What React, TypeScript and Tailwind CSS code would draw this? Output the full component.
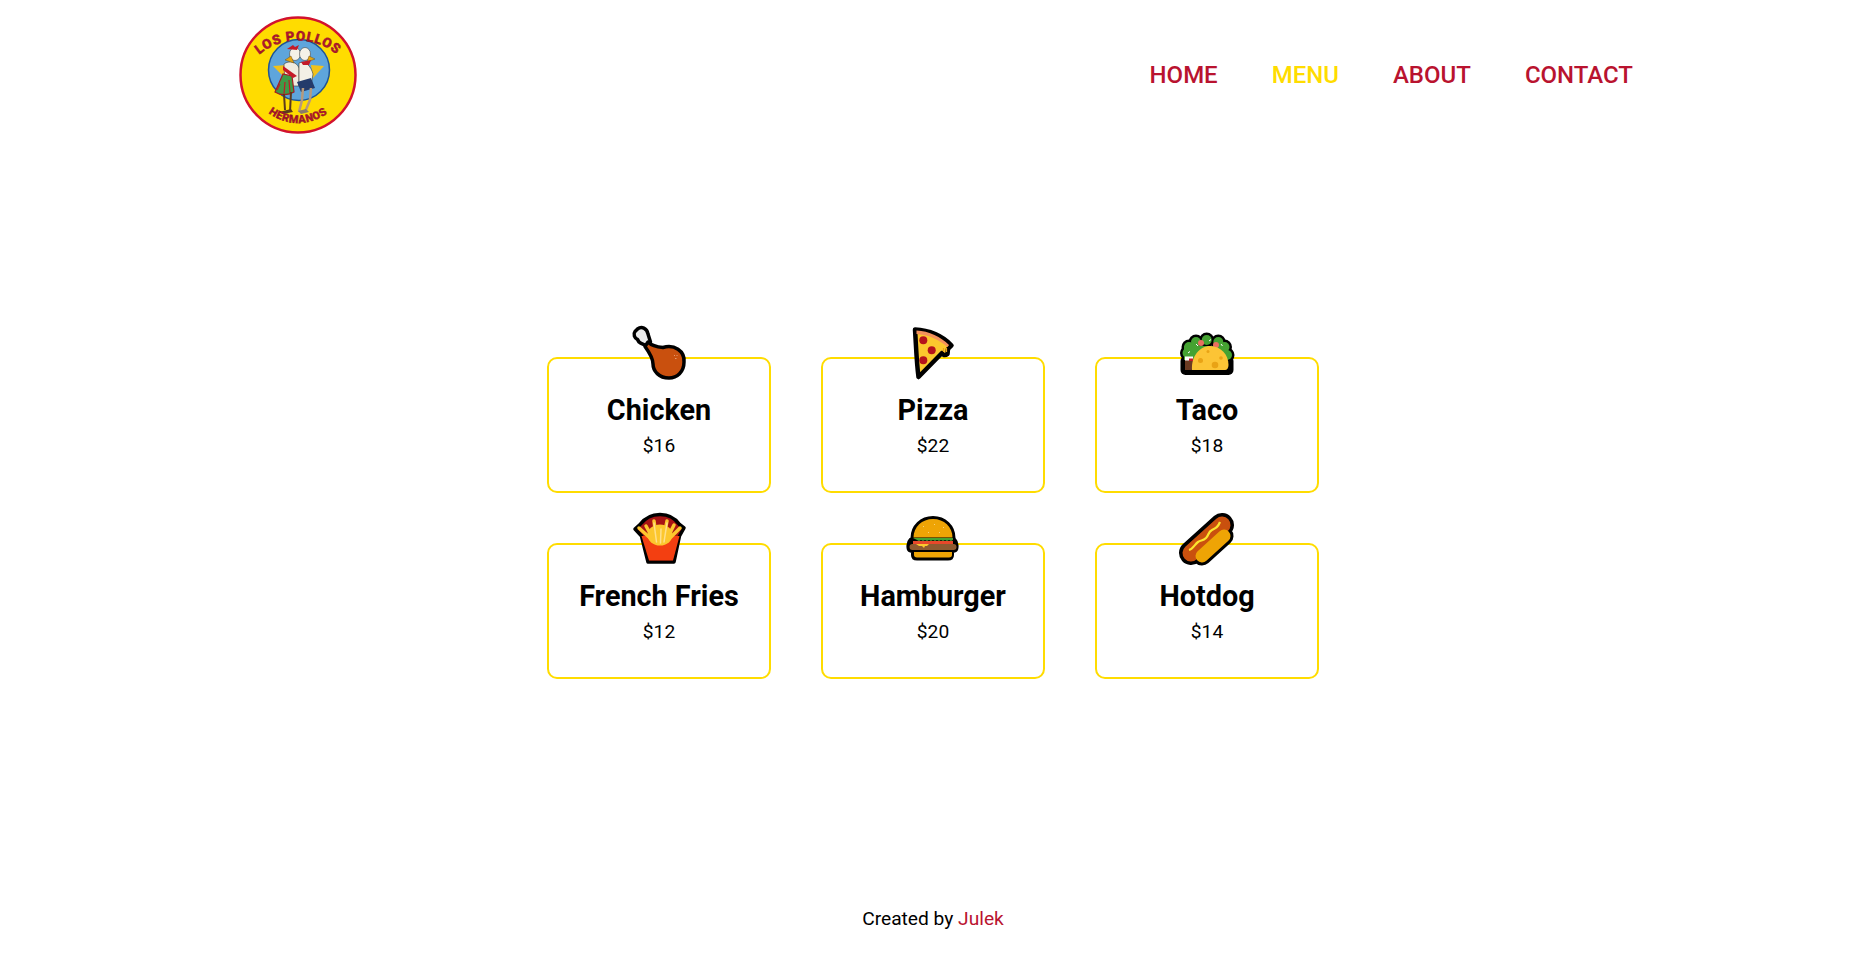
import React from 'react';

const Logo = () => (
  <svg width="118" height="118" viewBox="0 0 118 118" className="shrink-0">
    <circle cx="59" cy="59" r="57.5" fill="#ffdc00" stroke="#d2122e" strokeWidth="2.500" />
    <circle cx="60" cy="54" r="30.5" fill="#5ea5dc" stroke="#1f5596" strokeWidth="1.500" />
    <defs>
      <path id="logoTop" d="M 20 39 A 60 60 0 0 1 98 39" />
      <path id="logoBottom" d="M 12 72 A 49 49 0 0 0 106 72" />
    </defs>
    {/* star behind the birds */}
    <path d="M34 50 L48 49 L46 62 Z" fill="#f2c21a" />
    <path d="M85 50 L72 49 L74 62 Z" fill="#f2c21a" />
    {/* left bird */}
    <path d="M45 48 C50 44 58 46 60 52 L60 70 L46 70 Z" fill="#f0ece0" stroke="#3a3a30" strokeWidth="0.600" />
    <path d="M44 58 L36 76 C42 80 50 79 55 76 L53 60 Z" fill="#3f9a46" stroke="#a31d22" strokeWidth="1.200" />
    <path d="M41 68 L38 74 M46 66 L45 78 M50 64 L51 77" stroke="#c41a28" strokeWidth="1.200" />
    <path d="M44 50 L58 60 L54 62 L44 54 Z" fill="#c41a28" />
    <path d="M45 78 L46 94 M52 76 L51 96" stroke="#5b3a1e" strokeWidth="2" fill="none" />
    <path d="M40 96 L52 93 L54 96 L44 98 Z" fill="#5b3a1e" />
    <ellipse cx="56" cy="38" rx="5.500" ry="6.500" fill="#f5f2e8" stroke="#444" strokeWidth="0.600" />
    <path d="M52 40 L46 44 L55 47 Z" fill="#e3a612" stroke="#5a3a10" strokeWidth="0.400" />
    <path d="M48 33 L54 29 L56 31 L60 29 L58 34 Z" fill="#c41a28" />
    {/* right bird */}
    <path d="M60 47 C66 44 72 50 74 58 L72 70 L60 70 Z" fill="#f3f0e6" stroke="#3a3a30" strokeWidth="0.600" />
    <path d="M58 66 L72 62 L76 72 L62 76 Z" fill="#243b6b" />
    <path d="M64 72 L63 84 L60 96 M72 72 L71 84 L66 96" stroke="#b79a7c" strokeWidth="2.500" fill="none" />
    <path d="M59 95 L67 93 L70 96 L62 98 Z" fill="#8b7a6a" />
    <ellipse cx="66" cy="38" rx="5.500" ry="6.500" fill="#f5f2e8" stroke="#444" strokeWidth="0.600" />
    <path d="M70 40 L76 43 L68 46 Z" fill="#e3a612" stroke="#5a3a10" strokeWidth="0.400" />
    <path d="M62 46 L72 44 L70 49 L64 49 Z" fill="#c41a28" />
    <text fontFamily="Roboto, sans-serif" fontWeight="900" fontSize="13.500" fill="#b3172c" stroke="#7a1020" strokeWidth="0.300" letterSpacing="0.600">
      <textPath href="#logoTop" startOffset="50%" textAnchor="middle">LOS POLLOS</textPath>
    </text>
    <text fontFamily="Roboto, sans-serif" fontWeight="900" fontSize="11" fill="#b3172c" stroke="#7a1020" strokeWidth="0.300" letterSpacing="0.400">
      <textPath href="#logoBottom" startOffset="50%" textAnchor="middle">HERMANOS</textPath>
    </text>
  </svg>
);

const ChickenIcon = () => (
  <svg viewBox="0 0 64 64" className="w-16 h-16">
    <path d="M23.500 22 L21 14 C20 8 14.500 6 10.500 9 L8 11.500 C6 14 7.500 18.500 10.500 19.500 L12 22 C14 24 17 24.500 20 26 Z" fill="#ebebeb" stroke="#000" strokeWidth="3.500" strokeLinejoin="round" />
    <path d="M21 22 C25 26 30 27 36 27.500 C47 24 58 31 57 42 C57 52 50 58 42 58 C32 58 26 51 26 44 C26 38 22 32 18 26.500 Z" fill="#c9500e" stroke="#000" strokeWidth="3.500" strokeLinejoin="round" />
    <path d="M47 35 h1 v1 h-1z M49.500 35 h1 v1 h-1z M48 38 h1.500 v1 h-1.500z" fill="#e89a70" />
  </svg>
);

const PizzaIcon = () => (
  <svg viewBox="0 0 64 64" className="w-16 h-16">
    <path d="M14 9.500 C28 10 42 16 50.500 25.500 L47 29 L46.500 34 C44 36 41.500 35 41 33 L17.500 57 C15.500 42 15 24 14 9.500 Z" fill="#fcc72e" stroke="#000" strokeWidth="4.500" strokeLinejoin="round" />
    <path d="M15.500 10.500 C28 11 40 17 48 25 L46.500 27 C38 19.500 27 14.500 15.500 14 Z" fill="#f4915c" />
    <circle cx="22.300" cy="20.300" r="4" fill="#b5121b" />
    <circle cx="30.700" cy="30.300" r="4" fill="#b5121b" />
    <circle cx="22.300" cy="40.300" r="4" fill="#b5121b" />
    <path d="M42.500 28 L42.500 32 M45.500 28 L45.500 32" stroke="#e9a315" strokeWidth="1.200" />
  </svg>
);

const TacoIcon = () => {
  const bumps = [[12.500, 33], [14, 27], [21, 22], [31.700, 20], [43.300, 22], [49.500, 27], [52, 35]];
  return (
    <svg viewBox="0 0 64 64" className="w-16 h-16">
      {bumps.map(([x, y]) => (
        <circle key={`o${x}`} cx={x} cy={y} r="7.500" fill="#000" />
      ))}
      <rect x="5.500" y="36" width="53" height="19" rx="5" fill="#000" />
      {bumps.map(([x, y]) => (
        <circle key={`g${x}`} cx={x} cy={y} r="5" fill="#45a232" />
      ))}
      <rect x="9" y="26" width="44" height="14" fill="#45a232" />
      <circle cx="26" cy="23" r="3" fill="#ea6f5f" />
      <circle cx="41" cy="25" r="3" fill="#ea6f5f" />
      <path d="M21 24 l2 2 M34 21 l2 -1.500 M46 24 l1.500 2 M13 33 l2 -1.500" stroke="#fff" strokeWidth="1" />
      <rect x="10" y="36.500" width="8" height="5" fill="#fff" />
      <rect x="10" y="40.500" width="8" height="9.500" fill="#6b3a22" />
      <rect x="14" y="38.500" width="4" height="2.500" fill="#c41a28" />
      <path d="M17 50 C16 36 25 26 35 26 C46 26 53.500 35 53.500 45 C53.500 48 52 50 50 50 Z" fill="#fcc435" />
      <circle cx="33" cy="31.500" r="1.500" fill="#e9a315" />
      <circle cx="25.500" cy="40.500" r="2.500" fill="#e9a315" />
      <circle cx="40" cy="45" r="3.300" fill="#e9a315" />
      <circle cx="46" cy="38" r="1.800" fill="#e9a315" />
    </svg>
  );
};

const FriesIcon = () => (
  <svg viewBox="0 0 64 64" className="w-16 h-16">
    <path d="M8 23 L13 18.500 C18 12 25 8.500 33 8.500 C41 8.500 48 12 52.500 18.500 L57 22 L52.500 30 L47 56 L21 56 L14.500 30 Z" fill="#a81414" stroke="#000" strokeWidth="3.500" strokeLinejoin="round" />
    <path d="M14.500 30 L52.500 30 L46 54.500 L22 54.500 Z" fill="#f33f11" />
    <ellipse cx="33" cy="29" rx="12.500" ry="10.500" fill="#fcc72e" />
    <path d="M12 22 L22 31 M19 20 L25 31 M27 15 L29 30 M34 21 L33 32 M40 15 L37 30 M47 19 L41 31 M53 22 L44 31" stroke="#fcc72e" strokeWidth="3.500" strokeLinecap="round" />
    <path d="M27 17 L29.500 36 M34 23 L33.500 37 M40 17 L37 36" stroke="#ffe08a" strokeWidth="1.500" strokeLinecap="round" />
  </svg>
);

const BurgerIcon = () => (
  <svg viewBox="0 0 64 64" className="w-16 h-16">
    <path d="M10.500 32 C10.500 20 20 11 32 11 C44 11 53.500 20 53.500 32 L54 33 C57 36 57.500 43 55 45 L52 46 L52 49 C52 52 50 53.500 47 53.500 L16 53.500 C13 53.500 11 52 11 49 L11 46 L8 45 C5.500 43 6 36 9 33 Z" fill="#000" stroke="#000" strokeWidth="2" strokeLinejoin="round" />
    <path d="M12.500 31.500 C12.500 21 21 13 32 13 C43 13 51.500 21 51.500 31.500 Z" fill="#eea405" />
    <path d="M22 20 h1 v1 h-1z M33 18 h1 v1 h-1z M42 21 h1 v1 h-1z M27 26 h1 v1 h-1z M38 26 h1 v1 h-1z" fill="#f7d27a" />
    <path d="M12 32 h40 v2 l-2 1 -2 -1 -2 1 -2 -1 -2 1 -2 -1 -2 1 -2 -1 -2 1 -2 -1 -2 1 -2 -1 -2 1 -2 -1 -2 1 -2 -1 -2 1 -2 -1 z" fill="#45a232" />
    <rect x="12" y="35" width="40" height="3" fill="#e8482a" />
    <rect x="8.500" y="38" width="47" height="6" rx="3" fill="#8e5a30" />
    <path d="M15 38 h13 l-2 2 -2 0 -1 2 -2 -2 -3 0 z" fill="#fcc72e" />
    <path d="M13 46 h38 v3 c0 1.500 -1 2.500 -3 2.500 h-32 c-2 0 -3 -1 -3 -2.500 z" fill="#eea405" />
  </svg>
);

const HotdogIcon = () => (
  <svg viewBox="0 0 64 64" className="w-16 h-16">
    <line x1="16" y1="47" x2="47" y2="19" stroke="#000" strokeWidth="24" strokeLinecap="round" />
    <line x1="27" y1="50" x2="49" y2="30" stroke="#000" strokeWidth="19" strokeLinecap="round" />
    <line x1="16" y1="47" x2="47" y2="19" stroke="#c9500e" strokeWidth="17" strokeLinecap="round" />
    <path d="M14 44 C18 43 20 38 23 36 C26 34 28 35 31 32 C34 29 33 26 37 24 C41 22 43 21 45 16" fill="none" stroke="#fce62e" strokeWidth="2.200" />
    <line x1="27" y1="50" x2="49" y2="30" stroke="#eea405" strokeWidth="13" strokeLinecap="round" />
  </svg>
);

const items = [
  { name: 'Chicken', price: 16, icon: <ChickenIcon /> },
  { name: 'Pizza', price: 22, icon: <PizzaIcon /> },
  { name: 'Taco', price: 18, icon: <TacoIcon /> },
  { name: 'French Fries', price: 12, icon: <FriesIcon /> },
  { name: 'Hamburger', price: 20, icon: <BurgerIcon /> },
  { name: 'Hotdog', price: 14, icon: <HotdogIcon /> },
];

const links = ['HOME', 'MENU', 'ABOUT', 'CONTACT'];

const App = () => {
  return (
    <div className="h-screen flex flex-col bg-white text-black font-['Roboto',sans-serif]">
      <header className="h-[150px] pl-[239px] pr-[233px] flex items-center justify-between">
        <Logo />
        <nav className="flex gap-[54px]">
          {links.map((link) => (
            <a
              key={link}
              className={`text-2xl font-medium ${link === 'MENU' ? 'text-[#ffdc00]' : 'text-[#b9132f]'}`}
            >
              {link}
            </a>
          ))}
        </nav>
      </header>
      <main className="flex-1 flex items-center justify-center">
        <div className="grid grid-cols-[repeat(3,224px)] gap-[50px]">
          {items.map((item) => (
            <div
              key={item.name}
              className="relative h-[136px] border-2 border-[#ffdc00] rounded-[10px] flex flex-col items-center pt-[33px]"
            >
              <div className="absolute top-[-39px] left-1/2 -translate-x-1/2">{item.icon}</div>
              <h3 className="text-[28.8px] leading-9 font-bold">{item.name}</h3>
              <p className="text-[19.2px] leading-6 mt-[6px]">${item.price}</p>
            </div>
          ))}
        </div>
      </main>
      <footer className="h-[68px] flex items-center justify-center text-[19.2px] pb-[1px]">
        <p>
          Created by <a className="text-[#b9132f]">Julek</a>
        </p>
      </footer>
    </div>
  );
};

export default App;
